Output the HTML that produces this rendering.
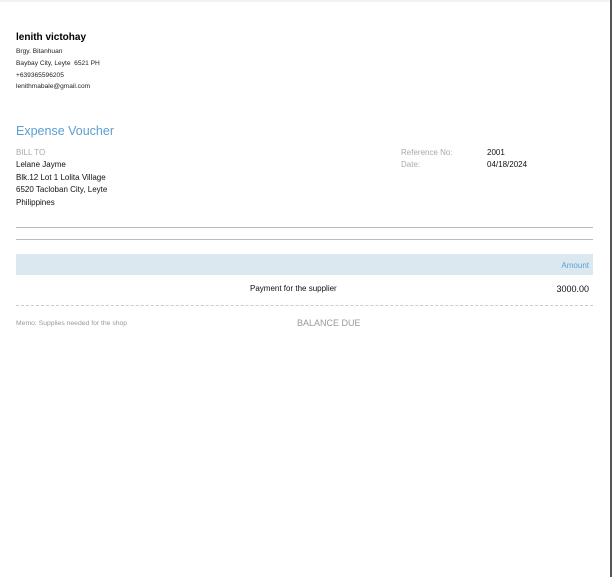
<!DOCTYPE html>
<html><head><style>
body{margin:0;width:612px;height:577px;background:#fff;font-family:"Liberation Sans",sans-serif;position:relative;overflow:hidden}
.a{position:absolute;white-space:nowrap;line-height:1}
</style></head><body>
<div style="position:absolute;left:0;top:0;width:612px;height:2px;background:#f2f2f2"></div>
<div style="position:absolute;left:610px;top:0;width:2px;height:577px;background:#555"></div>
<div class="a" style="left:16px;top:33px;font-size:10px;font-weight:bold;color:#000">lenith victohay</div>
<div class="a" style="left:16px;top:49px;font-size:6.6px;color:#222">Brgy. Bitanhuan</div>
<div class="a" style="left:16px;top:61px;font-size:6.6px;color:#222">Baybay City, Leyte&nbsp; 6521 PH</div>
<div class="a" style="left:16px;top:73px;font-size:6.6px;color:#222">+639365596205</div>
<div class="a" style="left:16px;top:84px;font-size:6.6px;color:#222">lenithmabale@gmail.com</div>
<div class="a" style="left:16px;top:125px;font-size:12.5px;color:#5a9fd0">Expense Voucher</div>
<div class="a" style="left:16px;top:149px;font-size:8px;color:#aaa">BILL TO</div>
<div class="a" style="left:16px;top:161px;font-size:8px;color:#111">Lelane Jayme</div>
<div class="a" style="left:16px;top:174px;font-size:8px;color:#111">Blk.12 Lot 1 Lolita Village</div>
<div class="a" style="left:16px;top:186px;font-size:8px;color:#111">6520 Tacloban City, Leyte</div>
<div class="a" style="left:16px;top:199px;font-size:8px;color:#111">Philippines</div>
<div class="a" style="left:401px;top:149px;font-size:8px;color:#aaa">Reference No:</div>
<div class="a" style="left:401px;top:161px;font-size:8px;color:#aaa">Date:</div>
<div class="a" style="left:487px;top:149px;font-size:8px;color:#111">2001</div>
<div class="a" style="left:487px;top:161px;font-size:8px;color:#111">04/18/2024</div>
<div style="position:absolute;left:16px;top:227px;width:577px;height:1px;background:#bbb"></div>
<div style="position:absolute;left:16px;top:239px;width:577px;height:1px;background:#bbb"></div>
<div style="position:absolute;left:16px;top:254px;width:577px;height:21px;background:#dce8f0"></div>
<div class="a" style="right:23px;top:262px;font-size:8px;color:#5a9fd0">Amount</div>
<div class="a" style="left:250px;top:285px;font-size:8px;color:#111">Payment for the supplier</div>
<div class="a" style="right:23px;top:285px;font-size:9px;color:#111">3000.00</div>
<div style="position:absolute;left:16px;top:305px;width:577px;border-top:1px dashed #ccc"></div>
<div class="a" style="left:16px;top:321px;font-size:6.8px;color:#999">Memo: Supplies needed for the shop</div>
<div class="a" style="left:297px;top:319px;font-size:9px;color:#999">BALANCE DUE</div>
</body></html>
